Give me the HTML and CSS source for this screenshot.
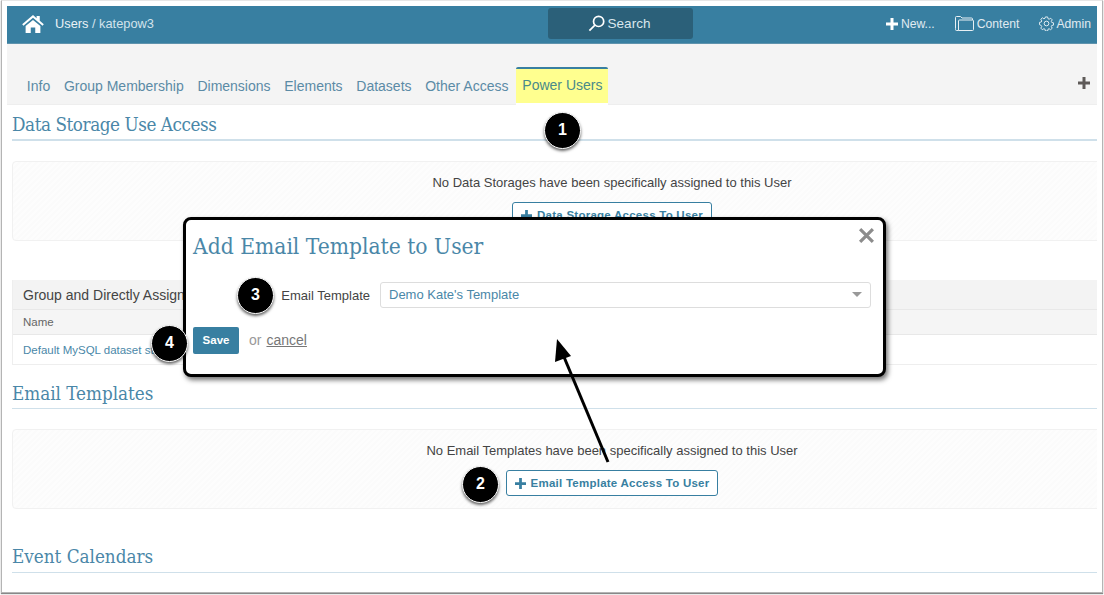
FILE: index.html
```html
<!DOCTYPE html>
<html lang="en">
<head>
<meta charset="utf-8">
<title>Users / katepow3</title>
<link rel="stylesheet" href="styles.css">
</head>
<body>
<div class="window">
  <div class="page">
    <header class="topbar">
      <div class="crumbs">
        <svg class="home" viewBox="0 0 24 20"><path d="M12 0 0 10.400l1.400 1.600L12 3l10.600 9 1.400-1.600L19.500 6.500V1h-3.500v2.500zM3.800 12.300V20h5.700v-6h5v6h5.700v-7.700L12 5.500z"/></svg>
        <span class="crumb-text"><b>Users</b> / katepow3</span>
      </div>
      <div class="search">
        <svg class="ico-search" viewBox="0 0 16 16"><circle cx="10" cy="6" r="4.800"/><path d="M6.500 9.500 1.300 14.700"/></svg>
        <span>Search</span>
      </div>
      <nav class="tools">
        <span class="tool"><svg class="ico-plus" viewBox="0 0 12 12"><path d="M4.500 0h3v4.500H12v3H7.500V12h-3V7.500H0v-3h4.500z"/></svg>New...</span>
        <span class="tool"><svg class="ico-folder" viewBox="0 0 19 15"><path d="M.5 12.500V1.500q0-1 1-1h4l1.500 1.500h9.500q1 0 1 1v1M3.500 14.500h14q1 0 1-1V5q0-1-1-1H4.500q-1 0-1 1v9.500zM3.500 14.500h-2q-1 0-1-1v-1"/></svg>Content</span>
        <span class="tool"><svg class="ico-gear" viewBox="0 0 16 16"><circle cx="8" cy="8" r="2.500"/><path d="M6.800 1h2.400l.4 1.900 1.200.5 1.700-1 1.600 1.700-1 1.600.5 1.200 1.900.4v2.400l-1.900.4-.5 1.200 1 1.700-1.700 1.600-1.600-1-1.200.5-.4 1.900H6.800l-.4-1.900-1.200-.5-1.700 1-1.600-1.700 1-1.600-.5-1.200L.5 9.200V6.800l1.900-.4.500-1.200-1-1.700 1.700-1.600 1.600 1 1.200-.5z"/></svg>Admin</span>
      </nav>
    </header>

    <div class="tabs">
      <a class="tab">Info</a>
      <a class="tab">Group Membership</a>
      <a class="tab">Dimensions</a>
      <a class="tab">Elements</a>
      <a class="tab">Datasets</a>
      <a class="tab">Other Access</a>
      <a class="tab tab-active">Power Users</a>
      <span class="tab-add"><svg viewBox="0 0 12 12"><path d="M4.500 0h3v4.500H12v3H7.500V12h-3V7.500H0v-3h4.500z"/></svg></span>
    </div>

    <main class="content">
      <section class="sec sec-first">
        <h2>Data Storage Use Access</h2>
        <div class="panel">
          <p>No Data Storages have been specifically assigned to this User</p>
          <a class="btn"><svg class="btn-plus" viewBox="0 0 12 12"><path d="M4.500 0h3v4.500H12v3H7.500V12h-3V7.500H0v-3h4.500z"/></svg>Data Storage Access To User</a>
        </div>
      </section>

      <div class="table">
        <div class="t-head">Group and Directly Assigned</div>
        <div class="t-cols">Name</div>
        <div class="t-row">Default MySQL dataset storage</div>
      </div>

      <section class="sec sec-email">
        <h2>Email Templates</h2>
        <div class="panel">
          <p>No Email Templates have been specifically assigned to this User</p>
          <a class="btn"><svg class="btn-plus" viewBox="0 0 12 12"><path d="M4.500 0h3v4.500H12v3H7.500V12h-3V7.500H0v-3h4.500z"/></svg>Email Template Access To User</a>
        </div>
      </section>

      <section class="sec sec-event">
        <h2>Event Calendars</h2>
      </section>
    </main>
  </div>
</div>

<div class="modal">
  <div class="modal-title">Add Email Template to User</div>
  <svg class="modal-x" viewBox="0 0 16 16"><path d="M2 2 14 14M14 2 2 14"/></svg>
  <div class="field">
    <label class="field-label">Email Template</label>
    <div class="select"><span>Demo Kate's Template</span><i class="caret"></i></div>
  </div>
  <div class="actions">
    <a class="save">Save</a>
    <span class="or">or</span>
    <a class="cancel">cancel</a>
  </div>
</div>

<svg class="arrow" viewBox="0 0 70 140"><path class="arrow-line" d="M59 127 15 22"/><path class="arrow-head" d="M8 4 22 21 6 27z"/></svg>

<div class="dot dot-1">1</div>
<div class="dot dot-2">2</div>
<div class="dot dot-3">3</div>
<div class="dot dot-4">4</div>
</body>
</html>
```

FILE: styles.css
```css
* { box-sizing: border-box; }
html, body { margin: 0; padding: 0; }
body {
  width: 1104px;
  height: 595px;
  overflow: hidden;
  position: relative;
  background: #fff;
  font-family: "Liberation Sans", Arial, sans-serif;
  color: #444;
}
.window {
  margin-left: 1px;
  width: 1102px;
  height: 593px;
  padding: 5px 4px 0 5px;
  border: 1px solid #b4b4b4;
  border-top-color: #e6e6e6;
  box-shadow: 0 1px 1px #888;
}
.page { width: 1090px; height: 586px; overflow: hidden; }

.topbar {
  height: 38px;
  background: #387fa1;
  border-bottom: 1px solid #5f93ad;
  display: flex;
  align-items: center;
  position: relative;
  color: #fff;
}
.crumbs { display: flex; align-items: center; padding-left: 15px; }
.home { width: 22px; height: 18px; fill: #fff; margin-right: 11px; margin-top: -2px; }
.crumb-text { font-size: 12.800px; color: #d3e3ec; margin-top: -3px; }
.crumb-text b { font-weight: normal; color: #eaf2f6; }
.search {
  position: absolute;
  left: 541px;
  top: 2px;
  width: 145px;
  height: 31px;
  border-radius: 3px;
  background: #2b6079;
  display: flex;
  align-items: center;
  justify-content: center;
  gap: 3px;
  padding-right: 3px;
  font-size: 13.500px;
  color: #d9e6ed;
}
.ico-search { width: 17px; height: 17px; fill: none; stroke: #fff; stroke-width: 1.600; }
.tools { margin-left: auto; display: flex; align-items: center; gap: 20px; padding-right: 6px; margin-top: -2px; font-size: 12.200px; color: #e0ebf1; }
.tool { display: flex; align-items: center; }
.ico-plus { width: 12px; height: 12px; fill: #fff; margin-right: 3px; }
.ico-folder { width: 19px; height: 15px; fill: none; stroke: #e8f0f4; stroke-width: 1; margin-right: 3px; }
.ico-gear { width: 15px; height: 15px; fill: none; stroke: #e8f0f4; stroke-width: 1; margin-right: 2px; }

.tabs {
  height: 61px;
  background: #f4f4f4;
  border-bottom: 1px solid #eee;
  display: flex;
  align-items: flex-end;
  padding-left: 13px;
  position: relative;
  font-size: 14px;
  color: #5b8ba6;
}
.tab { height: 33px; padding: 0 6.850px; line-height: 30px; white-space: nowrap; }
.tab-active {
  height: 36px;
  margin-left: 1px;
  padding: 0 6px;
  line-height: 32px;
  background: #ffff8f;
  border-top: 2px solid #387fa1;
  border-radius: 2px 2px 0 0;
  color: #4a8a8a;
  margin-bottom: 1px;
  box-shadow: 0 2px 0 #fff;
}
.tab-add { position: absolute; right: 7px; top: 33px; width: 12px; height: 12px; display: flex; }
.tab-add svg { width: 12px; height: 12px; fill: #5e5a58; }

.content { padding-left: 5px; width: 1205px; }
h2 {
  margin: 0;
  font-family: "DejaVu Serif Condensed", "DejaVu Serif", serif;
  font-weight: normal;
  font-size: 18.700px;
  line-height: 23px;
  color: #4a87a8;
  padding-bottom: 3px;
  border-bottom: 1px solid #cfe0ea;
}
.sec-first { padding-top: 8px; }
.sec-first h2 { border-bottom-width: 2px; letter-spacing: -.43px; }
.panel {
  margin-top: 20px;
  height: 80px;
  border: 1px solid #f1f1f1;
  border-radius: 4px;
  background: repeating-linear-gradient(135deg, #fbfbfb 0, #fbfbfb 2px, #fdfdfd 2px, #fdfdfd 4px);
  text-align: center;
  font-size: 13px;
  padding-top: 13px;
}
.panel p { margin: 0 0 12px; line-height: 15px; color: #444; }
.btn {
  display: inline-flex;
  align-items: center;
  height: 26px;
  padding: 0 8px;
  border: 1px solid #387fa1;
  border-radius: 3px;
  background: #fff;
  font-size: 11.500px;
  font-weight: bold;
  color: #387fa1;
  letter-spacing: .25px;
}
.btn-plus { width: 11px; height: 11px; fill: #387fa1; margin-right: 5px; }

.table {
  margin-top: 39px;
  height: 85px;
  border: 1px solid #eee;
  border-top: 0;
  font-size: 12px;
}
.t-head { height: 30px; line-height: 31px; padding-left: 10px; background: #f3f3f3; border-bottom: 1px solid #e8e8e8; font-size: 14px; color: #444; }
.t-cols { height: 25px; line-height: 25px; padding-left: 10px; background: #f5f5f5; border-bottom: 1px solid #e8e8e8; font-size: 11.500px; color: #666; }
.t-row { height: 29px; line-height: 31px; padding-left: 10px; color: #4a87a8; font-size: 11.500px; }

.sec-email { margin-top: 17px; }
.sec-event { margin-top: 36px; }
.sec-event h2 { padding-bottom: 4px; }

.modal {
  position: absolute;
  left: 183px;
  top: 217px;
  width: 703px;
  height: 160px;
  background: #fff;
  border: 3px solid #000;
  border-radius: 8px;
  box-shadow: 2px 3px 5px rgba(0,0,0,.55);
  padding: 12px 7px 0;
}
.modal-title {
  font-family: "DejaVu Serif Condensed", "DejaVu Serif", serif;
  font-size: 22.600px;
  line-height: 28px;
  color: #4a87a8;
}
.modal-x { position: absolute; right: 8px; top: 7px; width: 17px; height: 17px; fill: none; stroke: #8c8c8c; stroke-width: 3; }
.field { display: flex; align-items: center; margin-top: 22px; }
.field-label { width: 177px; text-align: right; font-size: 13px; color: #444; margin-right: 10px; }
.select {
  width: 491px;
  height: 26px;
  border: 1px solid #ddd;
  border-radius: 3px;
  display: flex;
  align-items: center;
  justify-content: space-between;
  padding: 0 8px 1px;
  font-size: 13px;
  color: #4a87a8;
}
.caret { width: 0; height: 0; border: 5px solid transparent; border-top: 5px solid #999; border-bottom: 0; }
.actions { display: flex; align-items: center; margin-top: 19px; font-size: 14px; }
.save {
  width: 46px;
  height: 27px;
  background: #387fa1;
  border-radius: 2px;
  color: #fff;
  font-size: 11.500px;
  font-weight: bold;
  text-align: center;
  line-height: 26px;
  margin-right: 10px;
}
.or { color: #999; margin: 0 5px 2px 0; }
.cancel { color: #777; text-decoration: underline; margin-bottom: 2px; }

.arrow { position: absolute; left: 549px; top: 335px; width: 70px; height: 140px; overflow: visible; }
.arrow-line { stroke: #000; stroke-width: 3; fill: none; }
.arrow-head { fill: #000; }

.dot {
  position: absolute;
  width: 37px;
  height: 37px;
  border-radius: 50%;
  background: #000;
  border: 1.500px solid #fff;
  box-shadow: 0 2px 3px rgba(0,0,0,.6);
  color: #fff;
  font-size: 16px;
  font-weight: bold;
  text-align: center;
  line-height: 34px;
}
.dot-1 { left: 544px; top: 112px; }
.dot-2 { left: 462px; top: 466px; }
.dot-3 { left: 237px; top: 277px; }
.dot-4 { left: 151px; top: 325px; }
```
